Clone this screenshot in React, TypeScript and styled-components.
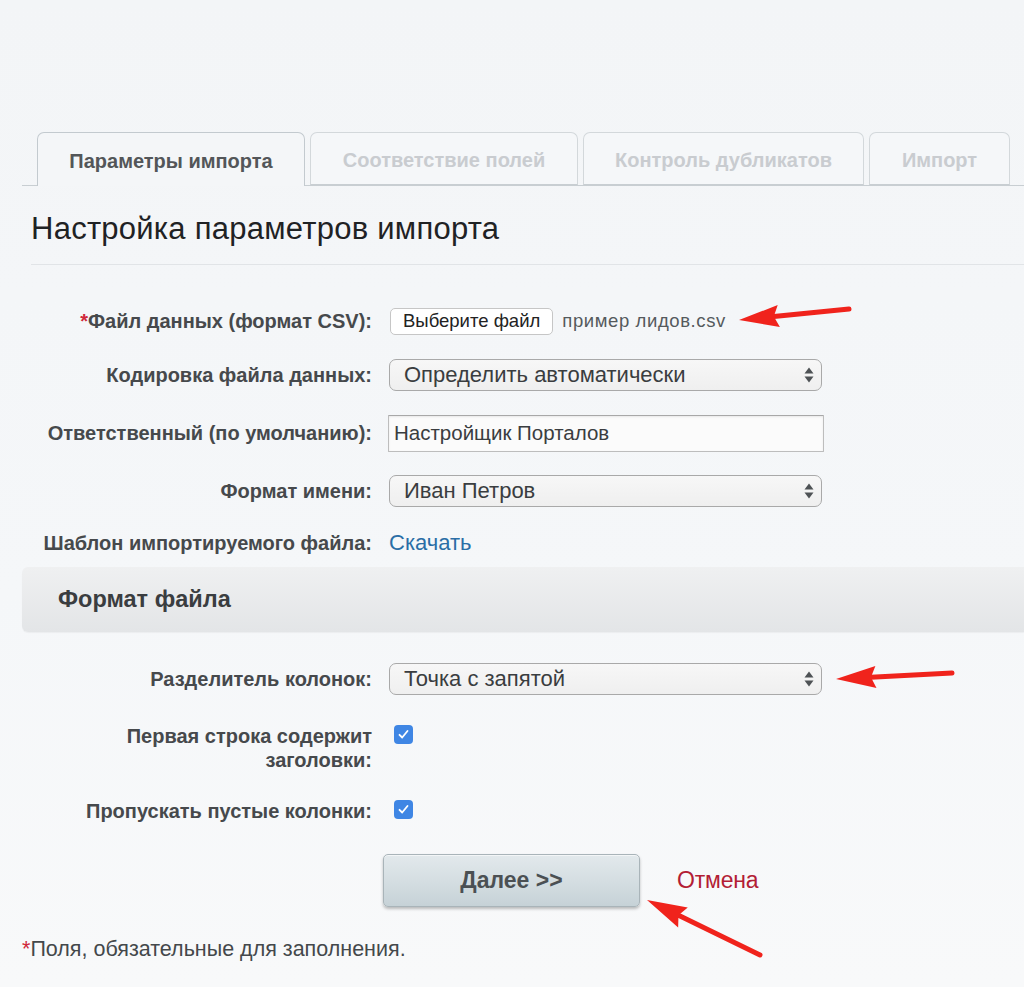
import React from "react";
import styled, { createGlobalStyle } from "styled-components";

const Global = createGlobalStyle`
  html, body { margin: 0; padding: 0; }
  body {
    background: linear-gradient(180deg, #f3f5f7 0%, #f5f7f9 60%, #f8f9fa 100%);
    font-family: "Liberation Sans", Arial, sans-serif;
    width: 1024px;
    height: 987px;
    overflow: hidden;
  }
`;

const Page = styled.div`
  position: relative;
  width: 1024px;
  height: 987px;
  padding-top: 132px;
  box-sizing: border-box;
`;

const TabBar = styled.div`
  display: flex;
  gap: 5px;
  margin-left: 22px;
  padding-left: 15px;
  border-bottom: 1px solid #c8ced2;
  height: 53px;
`;

const Tab = styled.div<{ $w: number; $active?: boolean }>`
  width: ${(p) => p.$w}px;
  height: ${(p) => (p.$active ? 54 : 53)}px;
  box-sizing: border-box;
  border: 1px solid ${(p) => (p.$active ? "#c3cacf" : "#d3d8db")};
  border-bottom: ${(p) => (p.$active ? "none" : "1px solid #c8ced2")};
  border-radius: 7px 7px 0 0;
  background: ${(p) => (p.$active ? "#f4f6f8" : "#f5f7f9")};
  display: flex;
  align-items: center;
  justify-content: center;
  font-weight: bold;
  font-size: 20px;
  color: ${(p) => (p.$active ? "#535659" : "#c9ccd0")};
  padding-top: 3px;
`;

const Heading = styled.h1`
  margin: 0 0 0 31px;
  height: 79px;
  box-sizing: border-box;
  padding-top: 25px;
  border-bottom: 1px solid #e1e4e7;
  font-weight: normal;
  font-size: 31px;
  color: #1f2224;
  font-family: "Liberation Sans", Arial, sans-serif;
  letter-spacing: 0.25px;
`;

const Form = styled.div`
  margin-left: 22px;
  padding-top: 29px;
`;

const Row = styled.div<{ $h: number; $top?: boolean; $pt?: number }>`
  display: grid;
  grid-template-columns: 350px auto;
  column-gap: 17px;
  height: ${(p) => p.$h}px;
  box-sizing: border-box;
  align-items: ${(p) => (p.$top ? "start" : "center")};
  padding-top: ${(p) => p.$pt ?? 0}px;
`;

const Label = styled.div`
  text-align: right;
  font-weight: bold;
  font-size: 20px;
  line-height: 24px;
  color: #46494c;
  white-space: nowrap;
`;

const Req = styled.span`
  color: #d0283a;
`;

const Controls = styled.div`
  display: flex;
  align-items: center;
  gap: 9px;
`;

const FileButton = styled.div`
  height: 27px;
  box-sizing: border-box;
  padding: 0 12px 0 12px;
  margin-left: 1px;
  border: 1px solid #c6c6c6;
  border-radius: 5px;
  background: #ffffff;
  display: flex;
  align-items: center;
  font-size: 18.5px;
  color: #222;
`;

const FileName = styled.span`
  font-size: 18.5px;
  color: #555a5d;
  letter-spacing: 0.6px;
`;

const SelectBox = styled.div`
  width: 433px;
  height: 32px;
  box-sizing: border-box;
  border: 1px solid #a9a9a9;
  border-radius: 7px;
  background: linear-gradient(180deg, #f7f7f7 0%, #efefef 100%);
  display: flex;
  align-items: center;
  justify-content: space-between;
  padding: 0 6px 0 14px;
  font-size: 22px;
  color: #3a3d40;
`;

const TextInput = styled.input`
  width: 436px;
  height: 37px;
  margin-left: -1px;
  box-sizing: border-box;
  border: 1px solid #bdbdbd;
  border-top-color: #a8a8a8;
  border-radius: 1px;
  background: #fbfbfb;
  box-shadow: inset 0 1px 2px rgba(0, 0, 0, 0.08);
  padding: 0 5px;
  font-family: "Liberation Sans", Arial, sans-serif;
  font-size: 20.5px;
  color: #3a3d40;
  outline: none;
`;

const Link = styled.a`
  font-size: 22px;
  color: #2a6ea6;
  text-decoration: none;
`;

const SectionBar = styled.div`
  margin-left: 22px;
  height: 65px;
  border-radius: 6px 0 0 6px;
  background: linear-gradient(180deg, #eff0f1 0%, #e3e5e7 100%);
  box-shadow: 0 1px 1px rgba(0, 0, 0, 0.04);
  display: flex;
  align-items: center;
  padding-left: 36px;
  font-weight: bold;
  font-size: 23.5px;
  color: #3a3d40;
`;

const Form2 = styled.div`
  margin-left: 22px;
  padding-top: 20px;
`;

const Check = styled.span`
  width: 19px;
  height: 19px;
  margin-left: 5px;
  margin-top: 1px;
  border-radius: 4px;
  background: #3f86e4;
  display: flex;
  align-items: center;
  justify-content: center;
`;

const Actions = styled.div`
  display: flex;
  align-items: center;
  margin-left: 383px;
  margin-top: 31px;
  gap: 37px;
`;

const NextButton = styled.div`
  width: 257px;
  height: 53px;
  box-sizing: border-box;
  border: 1px solid #a9b4b9;
  border-radius: 5px;
  background: linear-gradient(180deg, #e2e9ec 0%, #d5dee2 50%, #c6d2d7 100%);
  box-shadow: 0 2px 3px rgba(0, 0, 0, 0.25), inset 0 1px 0 rgba(255, 255, 255, 0.6);
  display: flex;
  align-items: center;
  justify-content: center;
  font-weight: bold;
  font-size: 23px;
  color: #4b5053;
`;

const Cancel = styled.a`
  font-size: 23px;
  color: #b31d35;
  text-decoration: none;
  letter-spacing: -0.2px;
`;

const Footnote = styled.div`
  margin: 30px 0 0 22px;
  font-size: 21.5px;
  color: #44484b;
`;

const Overlay = styled.svg`
  position: absolute;
  top: 0;
  left: 0;
  pointer-events: none;
`;

const Arrows = () => {
  const arrow = (tail: [number, number], tip: [number, number], key: number) => {
    const dx = tail[0] - tip[0];
    const dy = tail[1] - tip[1];
    const len = Math.hypot(dx, dy);
    const ux = dx / len;
    const uy = dy / len;
    const px = -uy;
    const py = ux;
    const L = 40;
    const W = 22;
    const bx = tip[0] + ux * L;
    const by = tip[1] + uy * L;
    const notchx = tip[0] + ux * (L - 5);
    const notchy = tip[1] + uy * (L - 5);
    const pts = `${tip[0]},${tip[1]} ${bx + (px * W) / 2},${by + (py * W) / 2} ${notchx},${notchy} ${bx - (px * W) / 2},${by - (py * W) / 2}`;
    return (
      <g key={key}>
        <line x1={tail[0]} y1={tail[1]} x2={notchx} y2={notchy} stroke="#f0231c" strokeWidth={5} strokeLinecap="round" />
        <polygon points={pts} fill="#f0231c" />
      </g>
    );
  };
  return (
    <Overlay width={1024} height={987} viewBox="0 0 1024 987">
      {arrow([849, 309], [739, 320], 1)}
      {arrow([952, 673], [836, 679], 2)}
      {arrow([760, 955], [647, 900], 3)}
    </Overlay>
  );
};

const SelectArrows = () => (
  <svg width="12" height="20" viewBox="0 0 12 20">
    <polygon points="6,2.5 10.5,8.5 1.5,8.5" fill="#4e5255" />
    <polygon points="1.5,11.5 10.5,11.5 6,17.5" fill="#4e5255" />
  </svg>
);

const CheckMark = () => (
  <svg width="13" height="13" viewBox="0 0 13 13">
    <path d="M2.5 6.8 L5.2 9.5 L10.5 3" fill="none" stroke="#fff" strokeWidth="1.8" strokeLinecap="round" strokeLinejoin="round" />
  </svg>
);

export default function App() {
  return (
    <Page>
      <Global />
      <TabBar>
        <Tab $w={268} $active>Параметры импорта</Tab>
        <Tab $w={268}>Соответствие полей</Tab>
        <Tab $w={281}>Контроль дубликатов</Tab>
        <Tab $w={141}>Импорт</Tab>
      </TabBar>
      <Heading>Настройка параметров импорта</Heading>
      <Form>
        <Row $h={54}>
          <Label>
            <Req>*</Req>Файл данных (формат CSV):
          </Label>
          <Controls>
            <FileButton>Выберите файл</FileButton>
            <FileName>пример лидов.csv</FileName>
          </Controls>
        </Row>
        <Row $h={54}>
          <Label>Кодировка файла данных:</Label>
          <SelectBox>
            <span>Определить автоматически</span>
            <SelectArrows />
          </SelectBox>
        </Row>
        <Row $h={62}>
          <Label>Ответственный (по умолчанию):</Label>
          <TextInput defaultValue="Настройщик Порталов" readOnly />
        </Row>
        <Row $h={54}>
          <Label>Формат имени:</Label>
          <SelectBox>
            <span>Иван Петров</span>
            <SelectArrows />
          </SelectBox>
        </Row>
        <Row $h={49}>
          <Label>Шаблон импортируемого файла:</Label>
          <Controls>
            <Link href="#">Скачать</Link>
          </Controls>
        </Row>
      </Form>
      <SectionBar>Формат файла</SectionBar>
      <Form2>
        <Row $h={54}>
          <Label>Разделитель колонок:</Label>
          <SelectBox>
            <span>Точка с запятой</span>
            <SelectArrows />
          </SelectBox>
        </Row>
        <Row $h={93} $top $pt={18}>
          <Label>
            Первая строка содержит
            <br />
            заголовки:
          </Label>
          <Check>
            <CheckMark />
          </Check>
        </Row>
        <Row $h={24} $top>
          <Label>Пропускать пустые колонки:</Label>
          <Check>
            <CheckMark />
          </Check>
        </Row>
      </Form2>
      <Actions>
        <NextButton>Далее &gt;&gt;</NextButton>
        <Cancel href="#">Отмена</Cancel>
      </Actions>
      <Footnote>
        <Req>*</Req>Поля, обязательные для заполнения.
      </Footnote>
      <Arrows />
    </Page>
  );
}
